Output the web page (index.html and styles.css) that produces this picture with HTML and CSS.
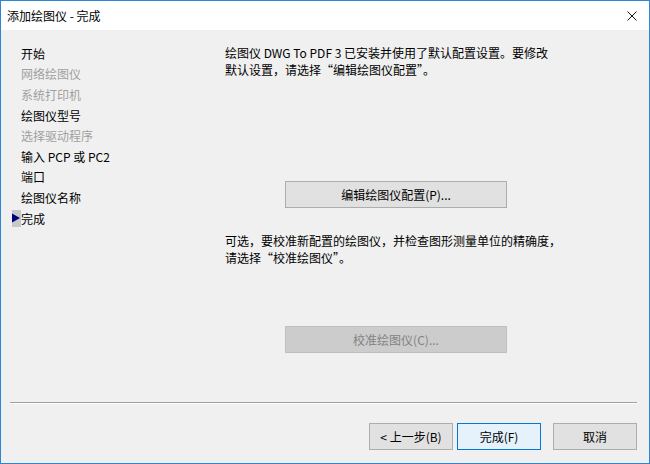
FILE: index.html
```html
<!DOCTYPE html>
<html lang="zh-CN">
<head>
<meta charset="UTF-8" />
<title>添加绘图仪 - 完成</title>
<link rel="stylesheet" href="styles.css">
</head>
<body>
<div class="window">
  <div class="titlebar">
    <span class="title">添加绘图仪 - 完成</span>
    <svg class="close" width="10" height="10" viewBox="0 0 10 10" aria-label="关闭">
      <path d="M0.5 0.5 L9.5 9.5 M9.5 0.5 L0.5 9.5" stroke="#111" stroke-width="1" fill="none" />
    </svg>
  </div>

  <div class="content">
    <ul class="steps">
      <li><span class="marker"></span>开始</li>
      <li class="off"><span class="marker"></span>网络绘图仪</li>
      <li class="off"><span class="marker"></span>系统打印机</li>
      <li><span class="marker"></span>绘图仪型号</li>
      <li class="off"><span class="marker"></span>选择驱动程序</li>
      <li><span class="marker"></span>输入 PCP 或 PC2</li>
      <li><span class="marker"></span>端口</li>
      <li><span class="marker"></span>绘图仪名称</li>
      <li class="current">
        <span class="marker">
          <svg width="8" height="10" viewBox="0 0 8 10"><path d="M0 0.5 L8 5 L0 9.5 Z" fill="#000080" /></svg>
        </span>完成
      </li>
    </ul>

    <div class="main">
      <p class="info">绘图仪 DWG To PDF 3 已安装并使用了默认配置设置。要修改<br>默认设置，请选择“编辑绘图仪配置”。</p>
      <button type="button" class="btn wide edit">编辑绘图仪配置(P)...</button>
      <p class="info calib">可选，要校准新配置的绘图仪，并检查图形测量单位的精确度，<br>请选择“校准绘图仪”。</p>
      <button type="button" class="btn wide calib-btn" disabled>校准绘图仪(C)...</button>
    </div>
  </div>

  <div class="separator"></div>

  <div class="footer">
    <button type="button" class="btn">&lt; 上一步(B)</button>
    <button type="button" class="btn primary">完成(F)</button>
    <button type="button" class="btn cancel">取消</button>
  </div>
</div>
</body>
</html>
```

FILE: styles.css
```css
:root {
  --accent: #2b87d6;
  --face: #f0f0f0;
  --btn-face: #e1e1e1;
  --btn-border: #adadad;
  --disabled: #a0a0a0;
  --font: "Noto Sans CJK SC", "Noto Sans", sans-serif;
}

* {
  box-sizing: border-box;
}

body {
  margin: 0;
  font-family: var(--font);
  font-size: 12px;
  color: #000;
}

.window {
  width: 650px;
  height: 464px;
  border: 1px solid var(--accent);
  background: var(--face);
  display: flex;
  flex-direction: column;
}

.titlebar {
  height: 29px;
  background: #fff;
  display: flex;
  align-items: center;
  justify-content: space-between;
  padding: 0 12px 0 6px;
}

.title {
  line-height: 29px;
}

.content {
  height: 371px;
  display: flex;
}

.steps {
  list-style: none;
  margin: 0;
  width: 224px;
  padding: 13px 0 0 11px;
}

.steps li {
  display: flex;
  align-items: center;
  height: 20.6px;
  white-space: nowrap;
}

.steps li.off {
  color: var(--disabled);
}

.marker {
  width: 9px;
  height: 17px;
  display: flex;
  align-items: center;
}

.current .marker {
  background: #c8c8c8;
}

.main {
  flex: 1;
  padding-top: 14px;
}

.info {
  margin: 0;
  line-height: 17px;
}

.btn {
  font-family: var(--font);
  font-size: 12px;
  color: #000;
  background: var(--btn-face);
  border: 1px solid var(--btn-border);
  height: 27px;
  width: 84px;
  padding: 0;
}

.btn.wide {
  display: block;
  width: 222px;
  margin-left: 60px;
}

.edit {
  margin-top: 103px;
}

.calib {
  margin-top: 24px;
}

.calib-btn {
  margin-top: 60px;
}

.btn:disabled {
  background: #cccccc;
  border-color: #bfbfbf;
  color: #838383;
}

.btn.primary {
  background: #e5f1fb;
  border-color: #0078d7;
  margin-left: 4px;
}

.btn.cancel {
  margin-left: 12px;
}

.separator {
  margin: 1px 12px 0 9px;
  border-top: 1px solid #a0a0a0;
  border-bottom: 1px solid #fff;
}

.footer {
  display: flex;
  justify-content: flex-end;
  padding: 19px 12px 0 0;
}
```
